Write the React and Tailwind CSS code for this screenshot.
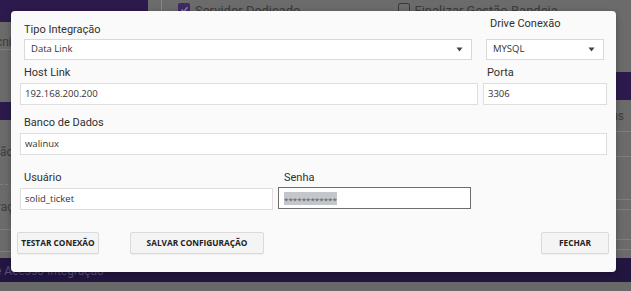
import React from "react";

const purple = "bg-[#2c1a4c]";

function Arrow() {
  return (
    <svg width="7" height="5" viewBox="0 0 7 5" className="shrink-0">
      <path d="M0.5 0.5 L6.5 0.5 L3.5 4.5 Z" fill="#444" />
    </svg>
  );
}

function Label({ children, className = "" }) {
  return (
    <div className={"h-[16px] pl-[4px] font-['Roboto'] text-[11px] leading-[16px] text-[#303030] " + className}>
      {children}
    </div>
  );
}

function Select({ value, className = "" }) {
  return (
    <div
      className={
        "flex h-[21px] items-center justify-between border border-[#d9d9d9] bg-white pl-[6px] pr-[8px] font-['Open_Sans'] text-[9.5px] text-[#333] " +
        className
      }
    >
      <span>{value}</span>
      <Arrow />
    </div>
  );
}

function Input({ value, className = "" }) {
  return (
    <div
      className={
        "flex h-[22px] items-center border border-[#dedede] bg-white pl-[4px] font-['Open_Sans'] text-[9.5px] text-[#333] " + className
      }
    >
      {value}
    </div>
  );
}

function Btn({ children, className = "" }) {
  return (
    <button
      className={
        "flex h-[22px] items-center justify-center rounded-[2px] border border-[#dadada] bg-[#f4f4f4] font-['Open_Sans'] text-[8.3px] font-bold text-[#222] shadow-[0_1px_1px_rgba(0,0,0,0.05)] " +
        className
      }
    >
      {children}
    </button>
  );
}

export default function App() {
  return (
    <div className="relative h-[291px] w-[631px] overflow-hidden bg-[#6b6b6b] font-['Roboto']">
      {/* página escurecida por trás do modal */}
      <div className="flex h-[258px]">
        <div className="flex w-[148px] flex-col">
          <div className={"h-[22px] " + purple} />
          <div className="flex h-[28px] items-center border-b border-[#7e7e7e]">
            <span className="-ml-[17px] pt-[12px] text-[12px] text-[#3c3c3c]">Técnico</span>
          </div>
          <div className="h-[52px]" />
          <div className={"h-[18px] " + purple} />
          <div className="flex h-[65px] items-center border-b border-dashed border-[#7e7e7e]">
            <span className="-ml-[58px] text-[12px] text-[#3e3e3e]">Configuração</span>
          </div>
          <div className="flex h-[45px] items-center border-b border-[#7e7e7e]">
            <span className="-ml-[30px] text-[12px] text-[#3e3e3e]">Integração</span>
          </div>
          <div className="h-[22px] border-b border-[#7e7e7e]" />
        </div>
        <div className="w-[13px]" />
        <div className="flex flex-1 flex-col border-l border-[#888]">
          <div className="flex h-[22px] items-start gap-[5px] pt-[3px] text-[13px] text-[#3a3a3a]">
            <div className="ml-[16px] flex h-[12px] w-[12px] items-center justify-center rounded-[2px] bg-[#3d2a66]">
              <svg width="9" height="9" viewBox="0 0 9 9">
                <path d="M1.5 4.5 L3.7 6.7 L7.5 2.3" stroke="#8d85a3" strokeWidth="1.4" fill="none" />
              </svg>
            </div>
            <span className="pt-[2px] leading-[12px]">Servidor Dedicado</span>
            <div className="ml-[92px] h-[12px] w-[12px] rounded-[2px] border border-[#3a3a3a]" />
            <span className="pt-[2px] leading-[12px]">Finalizar Gestão Bandeja</span>
          </div>
          <div className="h-[50px]" />
          <div className={"h-[28px] " + purple} />
          <div className="flex h-[32px] items-center justify-end border-b border-[#7e7e7e] pr-[7px] text-[12px] text-[#3e3e3e]">
            Status
          </div>
          <div className="h-[25px] border-b border-[#7e7e7e]" />
          <div className="h-[43px] border-b border-[#7e7e7e]" />
          <div className="h-[10px] border-b border-[#7e7e7e]" />
          <div className="h-[30px] border-b border-[#7e7e7e]" />
          <div className="h-[10px] border-b border-[#7e7e7e]" />
        </div>
      </div>
      <div className="flex h-[24px] items-center bg-[#221640] text-[12px] text-[#5a4f74]">
        <span className="-ml-[5px] pt-[1px]">e Acesso Integração</span>
      </div>
      <div className="h-[9px] bg-[#696969]" />

      {/* modal */}
      <div className="absolute left-[11px] top-[11px] h-[261px] w-[605px] rounded-[4px] bg-[#fafafa] px-[9px] shadow-[0_2px_6px_rgba(0,0,0,0.3)]">
        <div className="flex gap-[5px]">
          <div className="w-[458px]">
            <Label className="mt-[11px]">Tipo Integração</Label>
            <Select value="Data Link" className="ml-[4px] mr-[6px] mt-[1px]" />
          </div>
          <div className="w-[124px]">
            <Label className="mt-[5px] pl-[7px]">Drive Conexão</Label>
            <Select value="MYSQL" className="ml-[3px] mr-[3px] mt-[7px] pl-[4px]" />
          </div>
        </div>

        <div className="mt-[5px] flex gap-[5px]">
          <div className="w-[458px]">
            <Label>Host Link</Label>
            <Input value="192.168.200.200" className="mt-[2px]" />
          </div>
          <div className="w-[124px]">
            <Label>Porta</Label>
            <Input value="3306" className="mt-[2px]" />
          </div>
        </div>

        <div className="mt-[10px]">
          <Label>Banco de Dados</Label>
          <Input value="walinux" className="mt-[2px] w-[587px]" />
        </div>

        <div className="mt-[15px] flex gap-[5px]">
          <div className="w-[253px]">
            <Label>Usuário</Label>
            <Input value="solid_ticket" className="mt-[2px] h-[21px]" />
          </div>
          <div className="w-[193px]">
            <Label className="pl-[6px]">Senha</Label>
            <div className="mt-[1px] flex h-[22px] items-center border border-[#6e6e6e] bg-white pl-[5px]">
              <span className="h-[13px] bg-[#c3c6ca] font-['Open_Sans'] text-[8px] leading-[15px] text-[#555]">
                ************
              </span>
            </div>
          </div>
        </div>

        <div className="mt-[22px] flex">
          <Btn className="-ml-[3px] w-[82px]">TESTAR CONEXÃO</Btn>
          <Btn className="ml-[31px] w-[134px]">SALVAR CONFIGURAÇÃO</Btn>
          <Btn className="ml-auto mr-[-2px] w-[68px]">FECHAR</Btn>
        </div>
      </div>
    </div>
  );
}
